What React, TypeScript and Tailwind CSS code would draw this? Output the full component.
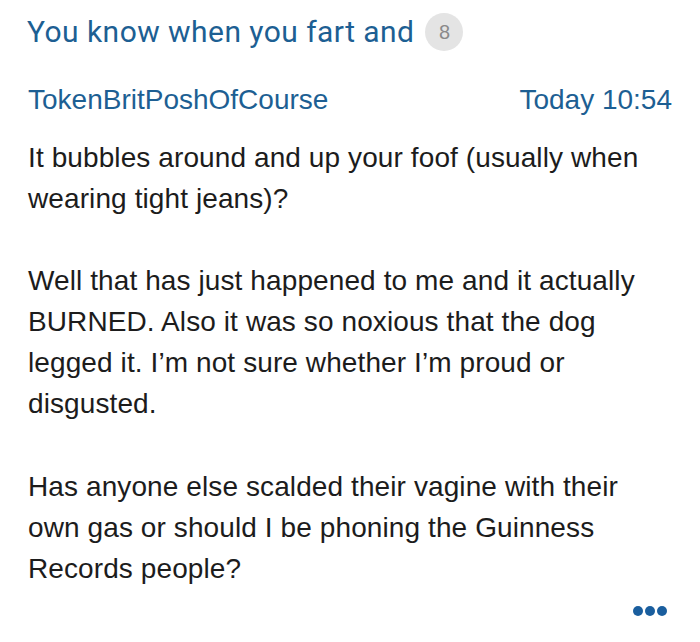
export default function App() {
  return (
    <div className="w-[700px] h-[642px] bg-white overflow-hidden">
      {/* Thread title */}
      <div className="flex items-center gap-[11px] pl-[27px] pt-[8px] h-[56px]">
        <h1 className="font-['Roboto',sans-serif] text-[30px] leading-[36px] text-[#1d5f93] tracking-[0.45px]">
          You know when you fart and
        </h1>
        <span className="flex items-center justify-center w-[38px] h-[38px] rounded-full bg-[#e4e4e4] text-[#8a8a8a] text-[20px] font-['Liberation_Sans',sans-serif] font-light">
          8
        </span>
      </div>

      {/* Post header */}
      <div className="flex items-baseline justify-between px-[28px] pt-[26px] font-['Liberation_Sans',sans-serif] text-[28px] leading-[36px] text-[#1d5f93]">
        <span>TokenBritPoshOfCourse</span>
        <span>Today 10:54</span>
      </div>

      {/* Post body */}
      <div className="px-[28px] pt-[19px] font-['Liberation_Sans',sans-serif] text-[28px] leading-[41px] tracking-[0.1px] text-[#1c1c1c]">
        <p>
          It bubbles around and up your foof (usually when
          <br />
          wearing tight jeans)?
        </p>
        <p className="mt-[41px]">
          Well that has just happened to me and it actually
          <br />
          BURNED. Also it was so noxious that the dog
          <br />
          legged it. I’m not sure whether I’m proud or
          <br />
          disgusted.
        </p>
        <p className="mt-[42px]">
          Has anyone else scalded their vagine with their
          <br />
          own gas or should I be phoning the Guinness
          <br />
          Records people?
        </p>
      </div>

      {/* More menu */}
      <div className="flex justify-end gap-[2px] pr-[33px] pt-[17px]">
        <span className="w-[10px] h-[10px] rounded-full bg-[#1a5e9e]" />
        <span className="w-[10px] h-[10px] rounded-full bg-[#1a5e9e]" />
        <span className="w-[10px] h-[10px] rounded-full bg-[#1a5e9e]" />
      </div>
    </div>
  );
}
